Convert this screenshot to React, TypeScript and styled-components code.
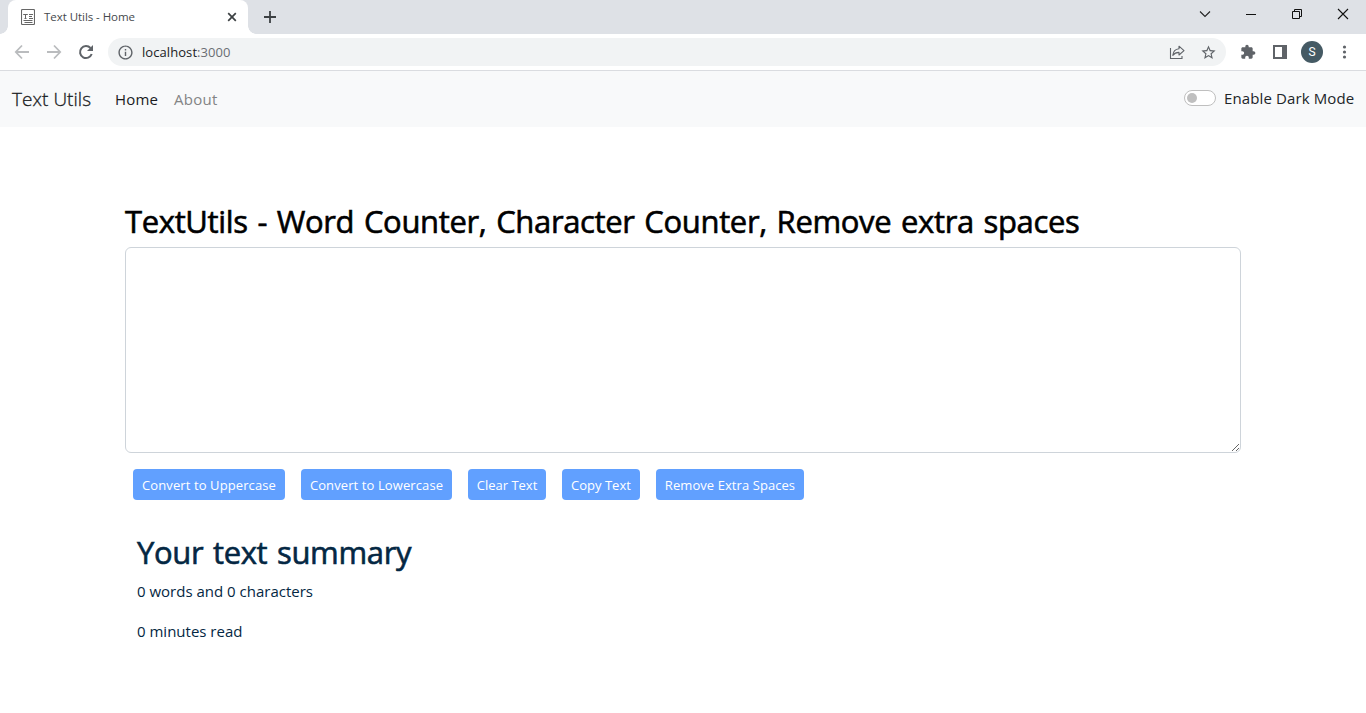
import React from "react";
import styled, { createGlobalStyle } from "styled-components";

const GlobalStyle = createGlobalStyle`
  *, *::before, *::after { box-sizing: border-box; }
  body {
    margin: 0;
    background: #fff;
    color: #042743;
    font-family: "Segoe UI", "Open Sans", "Noto Sans", sans-serif;
    font-size: 15px;
    line-height: 24px;
    overflow: hidden;
  }
`;

const Label = styled.span<{ $track?: number }>`
  letter-spacing: ${(p) => p.$track ?? 0}px;
  white-space: nowrap;
`;

const TabStrip = styled.header`
  display: flex;
  height: 34px;
  padding-left: 8px;
  background: #dee1e6;
`;

const Tab = styled.div`
  position: relative;
  display: flex;
  align-items: center;
  width: 240px;
  height: 34px;
  padding: 0 10px 0 13px;
  border-radius: 8px 8px 0 0;
  background: #fff;
  color: #45494d;
  font-size: 11.5px;

  &::before, &::after {
    content: "";
    position: absolute;
    bottom: 0;
    width: 8px;
    height: 8px;
  }
  &::before {
    left: -8px;
    background: radial-gradient(circle at 0 0, transparent 7.5px, #fff 8px);
  }
  &::after {
    right: -8px;
    background: radial-gradient(circle at 100% 0, transparent 7.5px, #fff 8px);
  }
`;

const TabTitle = styled(Label)`
  flex: 1;
  margin-left: 9px;
`;

const NewTab = styled.div`
  display: flex;
  margin: 10px 0 0 15px;
`;

const WindowControls = styled.div`
  display: flex;
  gap: 30px;
  height: 28px;
  align-items: center;
  margin-left: auto;
  padding-right: 15px;
`;

const Toolbar = styled.div`
  display: flex;
  align-items: center;
  height: 37px;
  padding: 0 12px 0 14px;
  border-bottom: 1px solid #dadce0;
  background: #fff;
`;

const NavIcons = styled.div`
  display: flex;
  gap: 16px;
  margin-right: 14px;
`;

const AddressBar = styled.div`
  display: flex;
  flex-shrink: 0;
  align-items: center;
  width: 1118px;
  height: 28px;
  padding: 0 9px;
  border-radius: 14px;
  background: #f1f3f4;
  color: #202124;
  font-size: 13px;
`;

const Url = styled(Label)`
  flex: 1;
  margin-left: 8px;
`;

const Port = styled.span`
  color: #6a6e73;
`;

const AddressActions = styled.div`
  display: flex;
  align-items: center;
  gap: 15px;
`;

const Extensions = styled.div`
  display: flex;
  align-items: center;
  gap: 17px;
  margin-left: 14px;
`;

const Avatar = styled.div`
  width: 22px;
  height: 22px;
  margin: 0 -3px;
  border-radius: 50%;
  background: #455a64;
  color: #fff;
  font: 12px/22px Roboto, sans-serif;
  text-align: center;
`;

const Navbar = styled.nav`
  display: flex;
  align-items: center;
  height: 56px;
  padding: 0 12px 2px;
  background: #f8f9fa;
  color: #212529;
`;

const Brand = styled(Label)`
  width: 79px;
  margin-right: 24px;
  padding-top: 2px;
  color: #1a1c1e;
  font-size: 19px;
  font-weight: 300;
  -webkit-text-stroke: 0.3px currentColor;
`;

const NavLink = styled(Label)<{ $active?: boolean }>`
  width: 43px;
  margin-right: 16px;
  padding-top: 1px;
  color: ${(p) => (p.$active ? "#1a1c1e" : "#838485")};
`;

const ThemeSwitch = styled.label`
  display: flex;
  align-items: center;
  margin-left: auto;
`;

const SwitchTrack = styled.span`
  display: flex;
  align-items: center;
  width: 32px;
  height: 16px;
  margin-right: 8px;
  padding-left: 2px;
  border: 1px solid #bfbfbf;
  border-radius: 8px;
  background: #fff;
`;

const SwitchKnob = styled.span`
  width: 10px;
  height: 10px;
  border-radius: 50%;
  background: #bfbfbf;
`;

const SwitchLabel = styled(Label)`
  width: 130px;
`;

const Content = styled.main`
  width: 1116px;
  margin: 0 auto;
  padding-top: 75px;
`;

const Heading = styled.h1<{ $track: number; $dark?: boolean }>`
  margin: 0;
  color: ${(p) => (p.$dark ? "#000" : "#042743")};
  font-size: 31px;
  font-weight: 400;
  -webkit-text-stroke: 0.6px currentColor;
  line-height: 38px;
  letter-spacing: ${(p) => p.$track}px;
  word-spacing: 2px;
  white-space: nowrap;
`;

const TextBox = styled.textarea`
  display: block;
  width: 100%;
  height: 206px;
  margin: 7px 0 16px;
  border: 1px solid #ced4da;
  border-radius: 6px;
  background: #fff;
  outline: none;
`;

const Actions = styled.div`
  display: flex;
  gap: 16px;
  padding-left: 8px;
`;

const ActionButton = styled.button<{ $width: number; $track: number }>`
  width: ${(p) => p.$width}px;
  height: 31px;
  padding: 0;
  border: 0;
  border-radius: 4px;
  background: #61a0ff;
  color: #fff;
  font-family: inherit;
  font-size: 13px;
  letter-spacing: ${(p) => p.$track}px;
  white-space: nowrap;
`;

const Summary = styled.section`
  padding: 33px 12px 0;
`;

const Stat = styled.p`
  margin: 8px 0 16px;
`;

const actions = [
  { label: "Convert to Uppercase", width: 152, track: 0.1 },
  { label: "Convert to Lowercase", width: 151, track: 0.1 },
  { label: "Clear Text", width: 78, track: 0 },
  { label: "Copy Text", width: 78, track: 0 },
  { label: "Remove Extra Spaces", width: 148, track: 0.07 },
];

const PageIcon = () => (
  <svg width="14" height="16" viewBox="0 0 14 16" fill="none" stroke="#666">
    <rect x=".5" y=".5" width="13" height="15" rx="1" strokeWidth="1.1" />
    <path d="M2.2 5.5h4.6M4.5 5.5v4M3.5 9.5h2M8 5.5h4M8 7.5h3M8 9.5h4M2.5 11.5h9M3.5 13.5h8" />
  </svg>
);
const CloseTabIcon = () => (
  <svg width="12" height="12" viewBox="0 0 12 12" stroke="#3c4043" strokeWidth="1.7">
    <path d="M2.2 2.2l7.6 7.6M9.8 2.2L2.2 9.8" />
  </svg>
);
const Icon24 = ({ d, color = "#5f6368", size = 16 }: { d: string; color?: string; size?: number }) => (
  <svg width={size} height={size} viewBox="0 0 24 24" fill={color}>
    <path d={d} />
  </svg>
);
const BackIcon = () => (
  <svg width="16" height="16" viewBox="0 0 16 16" fill="none" stroke="#babcbe" strokeWidth="1.8">
    <path d="M15 8H2M8 1.5L1.8 8L8 14.5" />
  </svg>
);
const ForwardIcon = () => (
  <svg width="16" height="16" viewBox="0 0 16 16" fill="none" stroke="#babcbe" strokeWidth="1.8">
    <path d="M1 8h13M8 1.5L14.2 8L8 14.5" />
  </svg>
);
const ReloadIcon = () => (
  <svg width="16" height="16" viewBox="0 0 16 16">
    <path d="M13.7 10A6 6 0 1 1 12.5 4" fill="none" stroke="#5f6368" strokeWidth="2" />
    <path d="M15 1v6H9z" fill="#5f6368" />
  </svg>
);
const ShareIcon = () => (
  <svg width="16" height="16" viewBox="0 0 16 16" fill="none" stroke="#5f6368" strokeWidth="1.1">
    <path d="M1.5 4v10.5H13V12" />
    <path d="M10 2.2L15 6.6L10 11V8.4C7.2 8.4 5.3 9.3 3.8 11.3C4.2 7.5 6.3 5 10 4.7z" strokeLinejoin="round" />
  </svg>
);
const PanelIcon = () => (
  <svg width="14" height="14" viewBox="0 0 14 14">
    <path fill="#5f6368" fillRule="evenodd" d="M0 0h14v14H0zM2 2v10h7V2z" />
  </svg>
);

const INFO =
  "M11 7h2v2h-2zm0 4h2v6h-2zm1-9C6.48 2 2 6.48 2 12s4.48 10 10 10 10-4.48 10-10S17.52 2 12 2zm0 18c-4.41 0-8-3.59-8-8s3.59-8 8-8 8 3.59 8 8-3.59 8-8 8z";
const STAR =
  "M22 9.24l-7.19-.62L12 2 9.19 8.63 2 9.24l5.46 4.73L5.82 21 12 17.27 18.18 21l-1.63-7.03L22 9.24zM12 15.4l-3.76 2.27 1-4.28-3.32-2.88 4.38-.38L12 6.1l1.71 4.04 4.38.38-3.32 2.88 1 4.28L12 15.4z";
const PUZZLE =
  "M20.5 11H19V7c0-1.1-.9-2-2-2h-4V3.5C13 2.12 11.88 1 10.5 1S8 2.12 8 3.5V5H4c-1.1 0-1.99.9-1.99 2v3.8H3.5c1.49 0 2.7 1.21 2.7 2.7s-1.21 2.7-2.7 2.7H2V20c0 1.1.9 2 2 2h3.8v-1.5c0-1.49 1.21-2.7 2.7-2.7 1.49 0 2.7 1.21 2.7 2.7V22H17c1.1 0 2-.9 2-2v-4h1.5c1.38 0 2.5-1.12 2.5-2.5S21.88 11 20.5 11z";

export default function App() {
  return (
    <>
      <GlobalStyle />
      <TabStrip>
        <Tab>
          <PageIcon />
          <TabTitle $track={-0.05}>Text Utils - Home</TabTitle>
          <CloseTabIcon />
        </Tab>
        <NewTab>
          <svg width="14" height="14" viewBox="0 0 14 14" stroke="#3c4043" strokeWidth="1.8">
            <path d="M7 1v12M1 7h12" />
          </svg>
        </NewTab>
        <WindowControls>
          <svg width="16" height="12" viewBox="0 0 16 12" fill="none" stroke="#222" strokeWidth="1.1">
            <path d="M3 3.5L8 8.5L13 3.5" />
          </svg>
          <svg width="16" height="12" viewBox="0 0 16 12" stroke="#111">
            <path d="M3 6.5h10" />
          </svg>
          <svg width="16" height="12" viewBox="0 0 16 12" fill="none" stroke="#111">
            <path d="M3.5 3.5h7v7h-7zM5.5 3.5v-2h7v7h-2" />
          </svg>
          <svg width="16" height="12" viewBox="0 0 16 12" stroke="#111" strokeWidth="1.1">
            <path d="M3 1l10 10M13 1L3 11" />
          </svg>
        </WindowControls>
      </TabStrip>
      <Toolbar>
        <NavIcons>
          <BackIcon />
          <ForwardIcon />
          <ReloadIcon />
        </NavIcons>
        <AddressBar>
          <Icon24 d={INFO} size={17} />
          <Url $track={0.07}>
            localhost<Port>:3000</Port>
          </Url>
          <AddressActions>
            <ShareIcon />
            <Icon24 d={STAR} size={17} />
          </AddressActions>
        </AddressBar>
        <Extensions>
          <Icon24 d={PUZZLE} />
          <PanelIcon />
          <Avatar>S</Avatar>
          <svg width="16" height="16" viewBox="0 0 16 16" fill="#5f6368">
            <circle cx="7.5" cy="3" r="1.6" />
            <circle cx="7.5" cy="8" r="1.6" />
            <circle cx="7.5" cy="13" r="1.6" />
          </svg>
        </Extensions>
      </Toolbar>
      <Navbar>
        <Brand $track={0.05}>Text Utils</Brand>
        <NavLink $active $track={0.2}>
          Home
        </NavLink>
        <NavLink $track={0.3}>About</NavLink>
        <ThemeSwitch>
          <SwitchTrack>
            <SwitchKnob />
          </SwitchTrack>
          <SwitchLabel $track={0.12}>Enable Dark Mode</SwitchLabel>
        </ThemeSwitch>
      </Navbar>
      <Content>
        <Heading $dark $track={-0.35}>
          TextUtils - Word Counter, Character Counter, Remove extra spaces
        </Heading>
        <TextBox />
        <Actions>
          {actions.map((a) => (
            <ActionButton key={a.label} $width={a.width} $track={a.track}>
              {a.label}
            </ActionButton>
          ))}
        </Actions>
        <Summary>
          <Heading as="h2" $track={-0.35}>
            Your text summary
          </Heading>
          <Stat>0 words and 0 characters</Stat>
          <Stat>0 minutes read</Stat>
        </Summary>
      </Content>
    </>
  );
}
